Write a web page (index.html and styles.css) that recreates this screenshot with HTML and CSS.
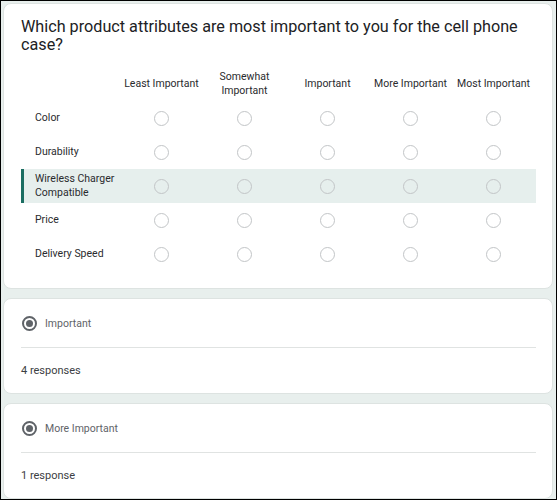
FILE: index.html
```html
<!DOCTYPE html>
<html>
<head>
<meta charset="utf-8">
<link rel="stylesheet" href="styles.css">
</head>
<body>
<div class="frame">
  <section class="card grid-card">
    <h1 class="title">Which product attributes are most important to you for the cell phone case?</h1>
    <div class="grid">
      <div class="row head">
        <div class="label"></div>
        <div class="col">Least Important</div>
        <div class="col">Somewhat<br>Important</div>
        <div class="col">Important</div>
        <div class="col">More Important</div>
        <div class="col">Most Important</div>
      </div>
      <div class="row">
        <div class="label">Color</div>
        <div class="col"><span class="radio"></span></div>
        <div class="col"><span class="radio"></span></div>
        <div class="col"><span class="radio"></span></div>
        <div class="col"><span class="radio"></span></div>
        <div class="col"><span class="radio"></span></div>
      </div>
      <div class="row">
        <div class="label">Durability</div>
        <div class="col"><span class="radio"></span></div>
        <div class="col"><span class="radio"></span></div>
        <div class="col"><span class="radio"></span></div>
        <div class="col"><span class="radio"></span></div>
        <div class="col"><span class="radio"></span></div>
      </div>
      <div class="row active">
        <div class="label">Wireless Charger<br>Compatible</div>
        <div class="col"><span class="radio"></span></div>
        <div class="col"><span class="radio"></span></div>
        <div class="col"><span class="radio"></span></div>
        <div class="col"><span class="radio"></span></div>
        <div class="col"><span class="radio"></span></div>
      </div>
      <div class="row">
        <div class="label">Price</div>
        <div class="col"><span class="radio"></span></div>
        <div class="col"><span class="radio"></span></div>
        <div class="col"><span class="radio"></span></div>
        <div class="col"><span class="radio"></span></div>
        <div class="col"><span class="radio"></span></div>
      </div>
      <div class="row">
        <div class="label">Delivery Speed</div>
        <div class="col"><span class="radio"></span></div>
        <div class="col"><span class="radio"></span></div>
        <div class="col"><span class="radio"></span></div>
        <div class="col"><span class="radio"></span></div>
        <div class="col"><span class="radio"></span></div>
      </div>
    </div>
  </section>

  <section class="card resp-card">
    <div class="choice"><span class="radio-on"></span><span class="choice-text">Important</span></div>
    <div class="divider"></div>
    <div class="count">4 responses</div>
  </section>

  <section class="card resp-card">
    <div class="choice"><span class="radio-on"></span><span class="choice-text">More Important</span></div>
    <div class="divider"></div>
    <div class="count">1 response</div>
  </section>
</div>
</body>
</html>
```

FILE: styles.css
```css
html, body {
  margin: 0;
  padding: 0;
}
body {
  font-family: Roboto, "Liberation Sans", Arial, sans-serif;
  color: #202124;
}
.frame {
  width: 557px;
  height: 500px;
  box-sizing: border-box;
  border: 1px solid #000;
  background: #e8efed;
  padding: 2px 3px 0 2px;
  display: flex;
  flex-direction: column;
  gap: 9px;
  overflow: hidden;
}
.card {
  background: #fff;
  border: 1px solid #dde3e1;
  border-radius: 8px;
  flex-shrink: 0;
}
.grid-card {
  padding: 14px 16px 17px 17px;
}
.title {
  margin: 0;
  font-size: 16.2px;
  line-height: 18px;
  font-weight: 400;
  color: #202124;
  letter-spacing: 0;
}
.grid {
  margin-top: 13px;
  display: flex;
  flex-direction: column;
}
.row {
  display: grid;
  grid-template-columns: 99px repeat(5, 83px);
  height: 34px;
  align-items: center;
  font-size: 10.5px;
  line-height: 14px;
  color: #2a2b2e;
}
.label {
  padding-left: 14px;
}
.col {
  text-align: center;
  display: flex;
  justify-content: center;
  align-items: center;
}
.row.active {
  background: #e6efed;
  box-shadow: inset 3px 0 0 #1b6e62;
  width: 515px;
}
.radio {
  width: 15px;
  height: 15px;
  box-sizing: border-box;
  border: 1.5px solid #c2c5c7;
  border-radius: 50%;
  display: block;
}
.resp-card {
  padding: 14px 16px 15px 17px;
}
.choice {
  display: flex;
  align-items: center;
  height: 20px;
  gap: 8px;
  padding-left: 1px;
}
.radio-on {
  width: 15px;
  height: 15px;
  box-sizing: border-box;
  border: 2px solid #5f6368;
  border-radius: 50%;
  display: flex;
  align-items: center;
  justify-content: center;
}
.radio-on::after {
  content: "";
  width: 7px;
  height: 7px;
  border-radius: 50%;
  background: #5f6368;
}
.choice-text {
  font-size: 10.5px;
  color: #5f6368;
}
.divider {
  height: 1px;
  background: #e0e3e2;
  margin: 14px 0 0 0;
  width: 515px;
}
.count {
  margin-top: 16px;
  font-size: 11px;
  line-height: 14px;
  color: #3c4043;
}
```
